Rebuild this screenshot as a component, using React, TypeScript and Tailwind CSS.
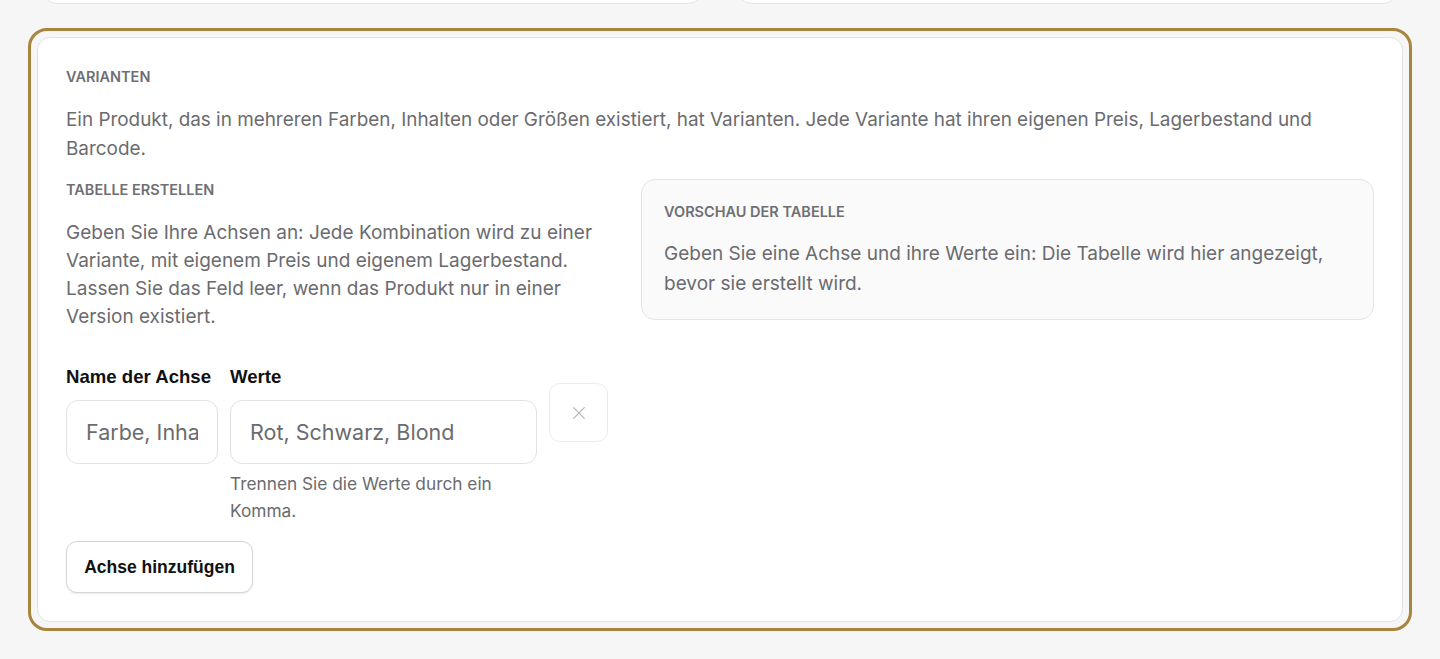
import React from "react";

const inter = { fontFamily: "Inter, 'Noto Sans', sans-serif" };
const arial = { fontFamily: "'Liberation Sans', Arial, sans-serif" };

export default function App() {
  return (
    <div className="min-h-[659px] w-full bg-[#f6f6f6] overflow-hidden" style={inter}>
      <div className="px-[28px]">
        <div className="mx-[13px] grid grid-cols-2 gap-[32px] -mt-[96px]">
          <div className="h-[100px] rounded-[16px] border border-[#e4e4e4] bg-white" />
          <div className="h-[100px] rounded-[16px] border border-[#e4e4e4] bg-white" />
        </div>
        <div className="mt-[24px] rounded-[19px] border-[3px] border-[#a8843f] p-[6px]">
          <div className="rounded-[13px] border border-[#e3e3e3] bg-white px-[28px] pt-[29px] pb-[28px]">
            <div className="text-[14.5px] leading-[20px] font-semibold text-[#6f6f73] uppercase">Varianten</div>
            <p className="mt-[18px] text-[18.9px] leading-[29px] text-[#6b6b6f]">
              Ein Produkt, das in mehreren Farben, Inhalten oder Größen existiert, hat Varianten. Jede Variante hat ihren eigenen Preis, Lagerbestand und Barcode.
            </p>
            <div className="mt-[16px] grid grid-cols-[544px_1fr] gap-[31px] items-start">
              <div>
                <div className="pt-[1px] text-[14.5px] leading-[20px] font-semibold text-[#6f6f73] uppercase">Tabelle erstellen</div>
                <p className="mt-[19px] text-[19px] leading-[28px] text-[#6b6b6f]">
                  Geben Sie Ihre Achsen an: Jede Kombination wird zu einer Variante, mit eigenem Preis und eigenem Lagerbestand. Lassen Sie das Feld leer, wenn das Produkt nur in einer Version existiert.
                </p>
                <div className="mt-[34px] flex items-start gap-[12px]">
                  <div className="flex flex-col w-[152px]">
                    <label className="text-[18.6px] leading-[24px] font-bold text-[#111] whitespace-nowrap" style={arial}>Name der Achse</label>
                    <input
                      placeholder="Farbe, Inhalt, Größe"
                      className="mt-[11px] h-[64px] w-[152px] rounded-[12px] border border-[#e2e2e2] bg-white px-[19px] text-[21.5px] text-[#111] placeholder:text-[#6b6b6f] outline-none"
                      style={inter}
                    />
                  </div>
                  <div className="flex flex-col w-[307px]">
                    <label className="text-[18.6px] leading-[24px] font-bold text-[#111]" style={arial}>Werte</label>
                    <input
                      placeholder="Rot, Schwarz, Blond"
                      className="mt-[11px] h-[64px] w-[307px] rounded-[12px] border border-[#e2e2e2] bg-white px-[19px] text-[21.5px] text-[#111] placeholder:text-[#6b6b6f] outline-none"
                      style={inter}
                    />
                    <p className="mt-[6px] text-[17.3px] leading-[27px] text-[#6b6b6f]">Trennen Sie die Werte durch ein Komma.</p>
                  </div>
                  <button className="mt-[18px] flex h-[59px] w-[59px] items-center justify-center rounded-[11px] border border-[#ececec] bg-white">
                    <svg width="16" height="16" viewBox="0 0 24 24" fill="none" stroke="#b4b4b4" strokeWidth="1.7" strokeLinecap="round">
                      <path d="M4 4L20 20M20 4L4 20" />
                    </svg>
                  </button>
                </div>
                <button
                  className="mt-[17px] h-[52px] w-[187px] rounded-[11px] border border-[#d6d6d6] bg-white text-[17.5px] font-bold text-[#111] shadow-[0_1px_2px_rgba(0,0,0,0.08)]"
                  style={arial}
                >
                  Achse hinzufügen
                </button>
              </div>
              <div className="rounded-[14px] border border-[#e4e4e4] bg-[#fafafa] px-[22px] pt-[22px] pb-[20px]">
                <div className="text-[14.5px] leading-[20px] font-semibold text-[#6f6f73] uppercase">Vorschau der Tabelle</div>
                <p className="mt-[17px] text-[19px] leading-[30px] text-[#6b6b6f]">
                  Geben Sie eine Achse und ihre Werte ein: Die Tabelle wird hier angezeigt, bevor sie erstellt wird.
                </p>
              </div>
            </div>
          </div>
        </div>
      </div>
    </div>
  );
}
